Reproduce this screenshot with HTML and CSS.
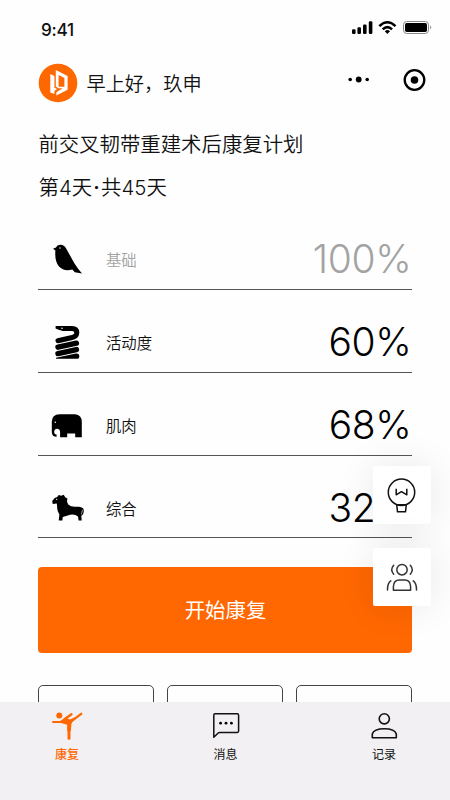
FILE: index.html
```html
<!DOCTYPE html>
<html lang="zh-CN">
<head>
<meta charset="utf-8">
<meta name="viewport" content="width=device-width, initial-scale=1">
<title>康复</title>
<link rel="stylesheet" href="styles.css">
</head>
<body>
<div class="phone">
  <header class="status">
    <span class="time">9:41</span>
    <svg class="signals" width="82" height="16" viewBox="0 0 82 16">
      <rect x="1" y="9.3" width="3.6" height="4.7" rx="1.2"/>
      <rect x="6.4" y="7.2" width="3.6" height="6.8" rx="1.2"/>
      <rect x="12" y="4.5" width="3.6" height="9.5" rx="1.2"/>
      <rect x="17.8" y="1.3" width="3.6" height="12.7" rx="1.2"/>
      <g fill="none" stroke="#000" stroke-width="2.5">
        <path d="M28.3 6.1Q36.4-1.7 44.5 6.1"/>
        <path d="M31.7 9.3Q36.4 4.9 41.1 9.3"/>
      </g>
      <path d="M33.8 11.2Q36.4 9 39 11.2L36.4 14Z"/>
      <rect x="52.5" y="1.5" width="25" height="12" rx="3.3" fill="none" stroke="#888"/>
      <rect x="54" y="3" width="22" height="9" rx="1.8"/>
      <path d="M79.2 5.6Q81.5 7.5 79.2 9.4Z" fill="#888"/>
    </svg>
  </header>

  <section class="greeting">
    <svg class="logo" width="40" height="40" viewBox="0 0 40 40">
      <circle cx="20" cy="20" r="19.3" fill="#ff6700"/>
      <path fill="#fff" d="M12.3 11L16.4 13.1V24.4L19 26L16.4 28V31L12.3 29.4Z"/>
      <path fill="#fff" fill-rule="evenodd" d="M17.8 7L29.6 13V26.8L18.4 32.6V29.2L24.6 25.2H20.6L17.8 23.4ZM20.6 12V23.8H26.4V15Z"/>
    </svg>
    <h1>早上好，玖申</h1>
    <svg class="capsule" width="82" height="26" viewBox="0 0 82 26">
      <circle cx="4.2" cy="12.5" r="1.8"/>
      <circle cx="12.7" cy="12.5" r="2.9"/>
      <circle cx="21.2" cy="12.5" r="1.8"/>
      <circle cx="68.5" cy="13" r="9.8" fill="none" stroke="#000" stroke-width="2.3"/>
      <circle cx="68.5" cy="13" r="3.8"/>
    </svg>
  </section>

  <main>
    <h2>前交叉韧带重建术后康复计划</h2>
    <p class="day">第4天<span class="dot">·</span>共45天</p>

    <ul class="metrics">
      <li class="done">
        <svg width="34" height="36" viewBox="0 0 34 36">
          <path d="M3 7.8L6 6.6Q7 3.7 10.5 3.7Q14.2 3.8 16 7.2L24.5 22.5Q28.5 28.7 32 32.6L24.8 31.2L22.3 28.4Q14 30.8 9 25.5Q4.5 20.5 5.4 9.5Z"/>
          <circle cx="10" cy="7" r=".7" fill="#fff"/>
        </svg>
        <span class="name">基础</span><strong>100%</strong>
      </li>
      <li>
        <svg width="34" height="36" viewBox="0 0 34 36">
          <g fill="none" stroke="#000" stroke-linecap="round" stroke-linejoin="round">
            <path stroke-width="5" d="M14 4.6H22Q26.8 4.6 26.8 8.8Q26.6 12.6 21 13.8L8 16.8"/>
            <path stroke-width="5.4" d="M8 23.2L26.4 19.2M8 29.6L26.4 25.6"/>
          </g>
          <path d="M5.6 2.1H18V7H13Q8 5.6 5.6 4.4ZM6 34.8V33.8L26 29.6Q29.3 29.3 29.3 32.2Q29.3 34.8 26.8 34.8Z"/>
          <circle cx="12" cy="4.3" r=".8" fill="#fff"/>
        </svg>
        <span class="name">活动度</span><strong>60%</strong>
      </li>
      <li>
        <svg width="34" height="36" viewBox="0 0 34 36">
          <path transform="translate(0 1)" d="M9.5 6.3H25Q31.8 6.7 31.8 14V29.3H25.2V25.5H17.2V29.3H10.1V24Q9.8 20.7 7 20.7Q4.2 20.7 4.2 24.2Q4.3 26.8 6.6 26.5V28.8Q2 28.8 1.8 24.2V13.5Q2 6.5 9.5 6.3Z"/>
          <circle cx="5.3" cy="15.2" r=".75" fill="#fff"/>
        </svg>
        <span class="name">肌肉</span><strong>68%</strong>
      </li>
      <li>
        <svg width="34" height="36" viewBox="0 0 34 36">
          <g transform="translate(.2 .4)">
            <path d="M2 10.5L4.5 7.5L7 6.5L8.5 4.5L11 5.3L13.5 4.4L15 6.8L17.2 8L16.8 11L18 14Q20.5 16.5 25 16.4H29Q31.5 16.9 32 18.2L31 24.5L31.5 30.2H28.4L27.8 26Q24 23 17.5 25L12.6 26.6L12.2 30.2H8.5L9.2 24Q6.7 20.5 7 16.8L6.6 13L2.5 13.5Z"/>
            <path d="M29 18Q33.2 16.5 32.9 21Q32.7 24.2 31 25" fill="none" stroke="#000" stroke-width="1.3"/>
            <circle cx="6.5" cy="9" r=".6" fill="#fff"/>
          </g>
        </svg>
        <span class="name">综合</span><strong>32<span class="unit">%</span></strong>
      </li>
    </ul>

    <button class="start" type="button">开始康复</button>
    <div class="cards"><div></div><div></div><div></div></div>
  </main>

  <aside class="floaters">
    <button type="button" aria-label="提示">
      <svg width="34" height="40" viewBox="0 0 34 40" fill="none" stroke="#111" stroke-width="1.5" stroke-linejoin="round">
        <circle cx="16.5" cy="17.3" r="13.2"/>
        <path d="M11.2 13.7V19.8L16.5 16.7L21.8 19.8V13.7M11.7 29.7H21.3L20.5 36.8H12.5Z"/>
      </svg>
    </button>
    <button type="button" aria-label="社区">
      <svg width="34" height="34" viewBox="0 0 34 34" fill="none" stroke="#333" stroke-width="1.5" stroke-linecap="round" stroke-linejoin="round">
        <circle cx="17" cy="9.7" r="5.2"/>
        <path d="M8.7 5.2Q4.8 9.7 8.7 14.2M25.3 5.2Q29.2 9.7 25.3 14.2"/>
        <path d="M8.4 30.2V26.5Q8.8 20 14.2 20H19.8Q25.2 20 25.6 26.5V30.2ZM5.8 20.8Q2.4 23 2.5 30M28.2 20.8Q31.6 23 31.5 30"/>
      </svg>
    </button>
  </aside>

  <nav>
    <a class="active">
      <svg width="34" height="30" viewBox="0 0 34 30">
        <circle cx="9.3" cy="4.6" r="3"/>
        <g fill="none" stroke="#ff6700" stroke-linecap="round">
          <path stroke-width="2" d="M3 11H14"/>
          <path stroke-width="2.3" d="M21.5 3.2L14.5 8.3"/>
          <path stroke-width="3" d="M19 27.3V13"/>
          <path stroke-width="2.3" d="M31.2 2.8L20 11.3"/>
        </g>
        <path d="M10 10L15.7 6.6L19.7 8.6L25 6.2L21.4 13L20.9 20H17.2V13.8L11 12Z"/>
      </svg>
      <span>康复</span>
    </a>
    <a>
      <svg width="34" height="30" viewBox="0 0 34 30">
        <path d="M6 2.8H28.3Q29.6 2.8 29.6 4.2V20.1Q29.6 21.4 28.3 21.4H10.7Q9.8 21.4 9.2 22L4.8 26.3V4.2Q4.8 2.8 6 2.8Z" fill="none" stroke="#111" stroke-width="1.5" stroke-linejoin="round"/>
        <circle cx="11.6" cy="12.2" r="1.4"/><circle cx="17" cy="12.2" r="1.4"/><circle cx="22.4" cy="12.2" r="1.4"/>
      </svg>
      <span>消息</span>
    </a>
    <a>
      <svg width="34" height="30" viewBox="0 0 34 30" fill="none" stroke="#111" stroke-width="1.6" stroke-linejoin="round">
        <circle cx="17.3" cy="7.8" r="5.1"/>
        <path d="M5.3 26.8V23Q6.9 17.8 17.3 17.8Q27.7 17.8 29.3 23V26.8Z"/>
      </svg>
      <span>记录</span>
    </a>
  </nav>
</div>
</body>
</html>
```
FILE: styles.css
```css
* {
  box-sizing: border-box;
}

body {
  margin: 0;
  background: #fefefe;
  color: #111;
  font-family: Inter, "Noto Sans CJK SC", sans-serif;
}

h1, h2, p, ul {
  margin: 0;
  padding: 0;
  font-weight: 350;
}

svg {
  display: block;
  flex: none;
}

.phone {
  position: relative;
  width: 450px;
  height: 800px;
  overflow: hidden;
}

.status {
  display: flex;
  align-items: center;
  justify-content: space-between;
  height: 60px;
  padding: 0 17px 0 41px;
}

.time {
  margin-top: -1px;
  font-size: 17.2px;
  font-weight: 500;
  letter-spacing: -0.3px;
}

.signals {
  margin-bottom: 5px;
}

.greeting {
  display: flex;
  align-items: center;
  height: 46px;
  padding: 0 22.5px 0 37.5px;
}

.greeting h1 {
  flex: 1;
  margin: 2px 0 0 9px;
  font-size: 19.2px;
  line-height: 28px;
}

.capsule {
  margin-bottom: 6px;
}

main {
  padding: 24px 38.4px 0;
}

h2, .day {
  font-size: 20.4px;
  line-height: 30px;
}

.day {
  margin-top: 13px;
  letter-spacing: 0.1px;
}

.dot {
  padding: 0 1px;
  font-weight: 600;
}

.metrics {
  list-style: none;
  margin-top: 4.4px;
}

.metrics li {
  display: flex;
  align-items: center;
  height: 82.75px;
  padding: 22px 0 0 11.5px;
  border-bottom: 1px solid #555;
}

.name {
  flex: 1;
  margin: 0 0 0 22px;
  font-size: 15.4px;
}

.metrics strong {
  font-size: 39px;
  font-weight: 340;
  line-height: 46px;
  letter-spacing: -0.3px;
  color: #000;
}

.metrics .done .name,
.metrics .done strong {
  color: #a3a3a3;
}

.start {
  display: block;
  width: 100%;
  height: 86px;
  margin-top: 28.7px;
  padding: 0 0 2px 1px;
  border: 0;
  border-radius: 4px;
  background: #ff6700;
  color: #fff;
  font: inherit;
  font-size: 20.4px;
}

.cards {
  display: grid;
  grid-template-columns: repeat(3, 1fr);
  gap: 13.5px;
  margin-top: 32px;
}

.cards div {
  height: 90px;
  border: 1px solid #444;
  border-radius: 5px;
}

.floaters {
  position: absolute;
  top: 466px;
  right: 19px;
  display: grid;
  gap: 24px;
}

.floaters button {
  display: grid;
  place-items: center;
  width: 58px;
  height: 58px;
  padding: 0;
  border: 0;
  border-radius: 2px;
  background: #fff;
  box-shadow: 0 0 38px rgba(0, 0, 0, 0.09);
}

nav {
  position: absolute;
  inset: auto 0 0;
  display: flex;
  justify-content: space-between;
  height: 98px;
  padding: 9px 49px 0 50px;
  background: #f2f0f2;
}

nav a {
  display: flex;
  flex-direction: column;
  align-items: center;
  gap: 5px;
  width: 34px;
  font-size: 12px;
  line-height: 18px;
}

nav .active {
  color: #ff6700;
  fill: #ff6700;
  font-weight: 500;
}
```
